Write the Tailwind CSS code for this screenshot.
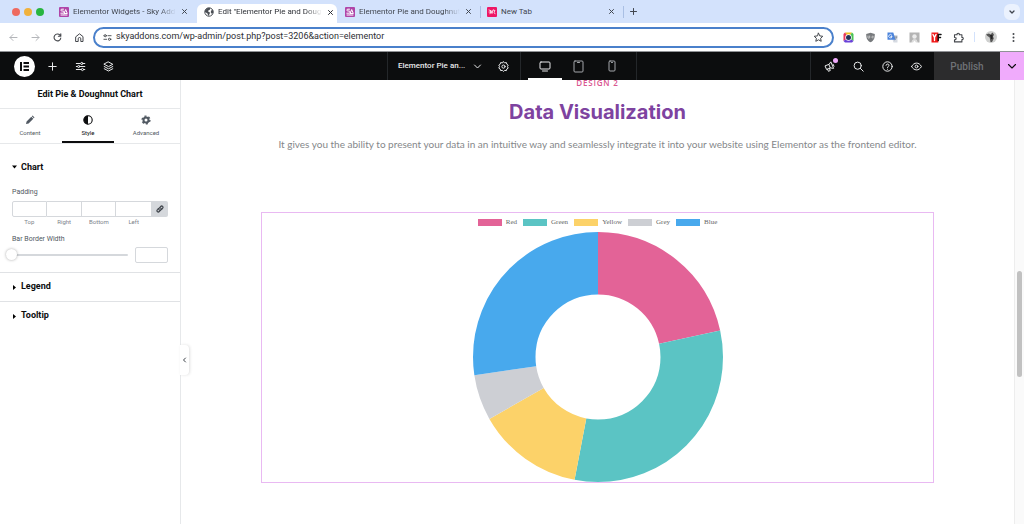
<!DOCTYPE html>
<html lang="en">
<head>
    <meta charset="UTF-8">
    <meta name="viewport" content="width=device-width, initial-scale=1.0">
    <title>Edit "Elementor Pie and Doughnut Chart"</title>
    <script src="https://cdn.jsdelivr.net/npm/@tailwindcss/browser@4"></script>
    <style>
        body { font-family: Roboto, "Liberation Sans", sans-serif; }
        .fade { -webkit-mask-image: linear-gradient(to right, #000 84%, transparent); mask-image: linear-gradient(to right, #000 84%, transparent); }
        .line { fill: none; stroke: currentColor; stroke-linecap: round; stroke-linejoin: round; }
        .slider { appearance: none; background: transparent; }
        .slider::-webkit-slider-runnable-track { height: 2px; border-radius: 2px; background: #d5d8dc; }
        .slider::-webkit-slider-thumb { appearance: none; width: 11px; height: 11px; margin-top: -5px; border-radius: 50%; background: #fff; box-shadow: 0 0 3px rgba(0,0,0,.35); }
    </style>
</head>
<body class="bg-white h-screen flex flex-col overflow-hidden">

    <!-- Browser tabs -->
    <div class="shrink-0 h-[23px] bg-[#d3e2fc] flex items-center text-[8px] text-[#41464f]">
        <div class="flex gap-1 pl-3 w-[55px] shrink-0">
            <span class="size-2 rounded-full bg-[#ee6a5f]"></span>
            <span class="size-2 rounded-full bg-[#f0b13c]"></span>
            <span class="size-2 rounded-full bg-[#28b53f]"></span>
        </div>
        <div class="flex items-center w-[142px] pl-1 pr-2 gap-1 shrink-0">
            <svg class="size-[10px] shrink-0" viewBox="0 0 10 10"><rect width="10" height="10" rx="1" fill="#b045a8"/><path class="line" style="color:#fff" d="M4.5 2.2H2.8C1.5 2.2 1.5 4 2.8 4H4c1.6 0 1.6 2.2 0 2.2H1.8M5 7l1.7-4.5L8.3 6.5H5.5M2 8h6"/></svg>
            <span class="fade w-[105px] whitespace-nowrap">Elementor Widgets - Sky Add</span>
            <button aria-label="Close tab" class="ml-auto"><svg class="line size-[9px]" viewBox="0 0 9 9"><path d="M2.5 2.5l4 4M6.5 2.5l-4 4"/></svg></button>
        </div>
        <div class="flex items-center w-[140px] h-[19px] self-end pl-[7px] pr-[5px] pb-[3px] gap-1 bg-white rounded-t-md text-[#2d3036] shrink-0">
            <svg class="size-[10px] shrink-0" viewBox="0 0 10 10"><circle cx="5" cy="5" r="4.2" fill="#fff" stroke="#4b4f55" stroke-width="1"/><path fill="#4b4f55" d="M1 3.5L3.5 1h3L5.8 2.8 4.3 3.5v1.3L6 5.4 5.6 7 4.3 9 3.5 6.5 1 5zM7 3.5l2-.5.3 2.4L8 7 6.8 5.5z"/></svg>
            <span class="fade w-[105px] whitespace-nowrap">Edit "Elementor Pie and Doug</span>
            <button aria-label="Close tab" class="ml-auto"><svg class="line size-[9px]" viewBox="0 0 9 9"><path d="M2.5 2.5l4 4M6.5 2.5l-4 4"/></svg></button>
        </div>
        <div class="flex items-center w-[144px] h-3 pl-2 pr-2 gap-1 border-r border-[#a9bfe4] shrink-0">
            <svg class="size-[10px] shrink-0" viewBox="0 0 10 10"><rect width="10" height="10" rx="1" fill="#b045a8"/><path class="line" style="color:#fff" d="M4.5 2.2H2.8C1.5 2.2 1.5 4 2.8 4H4c1.6 0 1.6 2.2 0 2.2H1.8M5 7l1.7-4.5L8.3 6.5H5.5M2 8h6"/></svg>
            <span class="fade w-[105px] whitespace-nowrap">Elementor Pie and Doughnut</span>
            <button aria-label="Close tab" class="ml-auto"><svg class="line size-[9px]" viewBox="0 0 9 9"><path d="M2.5 2.5l4 4M6.5 2.5l-4 4"/></svg></button>
        </div>
        <div class="flex items-center w-[143px] h-3 pl-[6px] pr-[7px] gap-1 border-r border-[#a9bfe4] shrink-0">
            <svg class="size-[10px] shrink-0" viewBox="0 0 10 10"><rect width="10" height="10" rx="1" fill="#ee1766"/><path class="line" style="color:#fff" stroke-width=".8" d="M2 3l2 .8L3 6.8M4 3.8l1 2.7 1-3.7 2 .8-1 1.6 1 1.6M2 5h2"/></svg>
            <span>New Tab</span>
            <button aria-label="Close tab" class="ml-auto"><svg class="line size-[9px]" viewBox="0 0 9 9"><path d="M2.5 2.5l4 4M6.5 2.5l-4 4"/></svg></button>
        </div>
        <button aria-label="New tab" class="ml-[5px]"><svg class="line size-[9px]" viewBox="0 0 9 9"><path d="M4.5 1.5v6M1.5 4.5h6"/></svg></button>
        <button aria-label="Search tabs" class="ml-auto mr-1 size-4 rounded-md bg-[#ebf2fe] flex items-center justify-center"><svg class="line size-2" viewBox="0 0 8 8"><path stroke-width="1.3" d="M2 3l2 2 2-2"/></svg></button>
    </div>

    <!-- Address bar -->
    <div class="shrink-0 h-[29px] bg-white border-b border-[#909296] flex items-center text-[#44474c]">
        <div class="flex items-center pl-2 gap-[11px] w-[93px] shrink-0">
            <button aria-label="Back" class="text-[#b3b5b9]"><svg class="line size-[11px] block" viewBox="0 0 11 11"><path d="M9 5.5H2M5 2.5l-3 3 3 3"/></svg></button>
            <button aria-label="Forward" class="text-[#b3b5b9]"><svg class="line size-[11px] block" viewBox="0 0 11 11"><path d="M2 5.5h7M6 2.5l3 3-3 3"/></svg></button>
            <button aria-label="Reload"><svg class="line size-[11px] block" viewBox="0 0 11 11"><path stroke-width="1.1" d="M8.8 6A3.4 3.4 0 1 1 8 3.2M8.8 1.8v2.4H6.4"/></svg></button>
            <button aria-label="Home"><svg class="line size-[11px] block" viewBox="0 0 11 11"><path d="M2 4.6L5.5 1.8 9 4.6v4.9H6.8V6.8a1.3 1.3 0 0 0-2.6 0v2.7H2z"/></svg></button>
        </div>
        <div class="flex-1 h-[21px] border-2 border-[#4a80cb] rounded-full flex items-center px-1 gap-1">
            <svg class="line size-[9px] ml-1 shrink-0" viewBox="0 0 10 10"><path d="M1 3h2.5M6.5 7H9M5.5 3H9M1 7h3"/><circle cx="2.5" cy="3" r="1.2" fill="#fff"/><circle cx="7.2" cy="7" r="1.2" fill="#fff"/></svg>
            <input type="text" aria-label="Address" value="skyaddons.com/wp-admin/post.php?post=3206&amp;action=elementor" class="flex-1 min-w-0 text-[9px] text-[#2c2e33] outline-none">
            <button aria-label="Bookmark"><svg class="line size-[11px] mr-1 block" viewBox="0 0 11 11"><path d="M5.5 1.2l1.3 2.7 3 .4-2.2 2 .6 3-2.7-1.5-2.7 1.5.6-3-2.2-2 3-.4z"/></svg></button>
        </div>
        <div class="flex items-center pl-[9px] gap-[11px] w-[190px] shrink-0">
            <svg class="size-[11px]" viewBox="0 0 11 11"><path fill="#f0c020" d="M2 .5h7L5.5 5.5z"/><path fill="#e8385a" d="M0.5 9V2L2 .5l3.5 5z"/><path fill="#4ac355" d="M9 .5L10.5 2v7l-5-3.5z"/><path fill="#6941d8" d="M.5 9L2 10.5h7L10.5 9l-5-3.5z"/><circle cx="5.5" cy="5.5" r="3.2" fill="#fff"/><circle cx="5.5" cy="5.5" r="2.5" fill="#24355c"/></svg>
            <svg class="size-[11px]" viewBox="0 0 11 11"><path fill="#777a7d" d="M5.5.8L9.8 2c0 4.5-1 6.6-4.3 8.3C2.2 8.6 1.2 6.5 1.2 2z"/><path class="line" style="color:#ddd" stroke-width=".8" d="M3 4v1.5c0 1 1.7 1 1.7 0V4M8.2 4.3c-2-.8-2 2.2 0 1.6"/></svg>
            <svg class="size-[11px]" viewBox="0 0 11 11"><path fill="#d5dae2" d="M4 3h6.5v7.5H6.5z"/><path fill="#4b84dc" d="M.5.5h5.8l2.2 7.2H.5z"/><path class="line" style="color:#fff" stroke-width=".8" d="M4.8 3.2a1.7 1.7 0 1 0 .3 1.3H3.8"/><path class="line" style="color:#6d7683" stroke-width=".7" d="M7.5 5h2.5M9.3 5c0 1.5-.7 2.3-1.3 2.8"/></svg>
            <svg class="size-[11px]" viewBox="0 0 11 11"><path fill="#b4b4b4" d="M.5.5h10v10h-2L7.5 7.8H4L2.5 10.5h-2z"/><circle cx="5.5" cy="4.5" r="2.2" fill="#ececec"/><path fill="#ddd" d="M2.5 10.5c0-4.5 6-4.5 6 0H7L5.5 8.5 4 10.5z"/></svg>
            <svg class="size-[11px]" viewBox="0 0 11 11"><path fill="#f01818" d="M.5.5h6.8v10H.5z"/><path class="line" style="color:#fff" stroke-width="1.4" d="M2 2.5l1.5 3 1.5-3M3.5 5.5v3"/><path class="line" style="color:#111" stroke-width="1.5" d="M10 2.5H7.2v6M7.2 5.5h2.3"/></svg>
            <button aria-label="Extensions"><svg class="line size-[11px] block" viewBox="0 0 11 11"><path stroke-width="1.1" d="M1.5 2.8h2.6c-.6-2 2.8-2 2.2 0h2.6v2.6c1.8-.4 1.8 2.6 0 2.2v2.3H1.5V7.7c2.2.4 2.2-2.6 0-2.2z"/></svg></button>
            <span class="w-px h-[10px] bg-[#d3e2fc] -mx-px"></span>
            <svg class="size-3" viewBox="0 0 12 12"><circle cx="6" cy="6" r="6" fill="#cfd0cf"/><path fill="#555" d="M1 3.5l3-1 1.5 1 2-2 1.5 2.2-1 1.8.8 2L7 11H5.5L4.7 6.5 2.5 5z"/><path fill="#222" d="M5 4h2.5v4H6z"/></svg>
            <button aria-label="Menu"><svg class="size-[11px] block" viewBox="0 0 11 11" fill="#44474c"><circle cx="5.5" cy="2" r="1"/><circle cx="5.5" cy="5.5" r="1"/><circle cx="5.5" cy="9" r="1"/></svg></button>
        </div>
    </div>

    <!-- Elementor top bar -->
    <header class="shrink-0 h-7 bg-[#0c0d0e] text-[#e8e9ea] flex">
        <div class="flex-1 flex items-center gap-[17px]">
            <button aria-label="Elementor" class="size-[21px] ml-[14px] -mr-[5px]"><svg class="block" viewBox="0 0 21 21"><circle cx="10.5" cy="10.5" r="10.5" fill="#fff"/><path fill="#0c0d0e" d="M6 6h2v9H6zM9.5 6H15v2H9.5zM9.5 9.5H15v2H9.5zM9.5 13H15v2H9.5z"/></svg></button>
            <button aria-label="Add element"><svg class="line size-[11px] block" viewBox="0 0 11 11"><path d="M5.5 1.8v7.4M1.8 5.5h7.4"/></svg></button>
            <button aria-label="Site settings"><svg class="line size-[11px] block" viewBox="0 0 11 11"><path d="M1.3 2.5h4M8.3 2.5h1.5M1.3 5.5h1M5.3 5.5h4.5M1.3 8.5h5M9 8.5h.8"/><circle cx="6.8" cy="2.5" r="1.1"/><circle cx="3.7" cy="5.5" r="1.1"/><circle cx="7.5" cy="8.5" r="1.1"/></svg></button>
            <button aria-label="Structure"><svg class="line size-[11px] block" viewBox="0 0 11 11"><path d="M5.5 1l4.3 2.3-4.3 2.3-4.3-2.3zM1.2 5.5l4.3 2.3 4.3-2.3M1.2 7.7L5.5 10l4.3-2.3"/></svg></button>
        </div>
        <div class="flex w-[250px] shrink-0 border-x border-[#24272a]">
            <button class="flex items-center pl-[10px] gap-2 text-[8px] font-medium whitespace-nowrap">Elementor Pie an...<svg class="line size-[9px]" viewBox="0 0 9 9"><path d="M1.5 3l3 3 3-3"/></svg></button>
            <button aria-label="Page settings" class="w-[34px] ml-auto pr-[1px] flex items-center justify-center border-r border-[#24272a]"><svg class="line size-[11px]" viewBox="0 0 11 11"><path d="M5.5.8l1.2 1 1.7-.2.4 1.6 1.4 1-.7 1.4.7 1.5-1.4.9-.4 1.6-1.7-.2-1.2 1-1.2-1-1.7.2-.4-1.6-1.4-.9.7-1.5-.7-1.4 1.4-1 .4-1.6 1.7.2z"/><circle cx="5.5" cy="5.6" r="1.6"/></svg></button>
            <div class="flex w-[115px] justify-between px-[7px]">
                <button aria-label="Desktop" class="w-[34px] border-b-2 border-white pt-[2px] flex items-center justify-center"><svg class="line w-3 h-[11px]" viewBox="0 0 12 11"><rect x="1" y="1" width="10" height="7" rx="1"/><path d="M3.5 10h5"/></svg></button>
                <button aria-label="Tablet" class="w-[34px] flex items-center justify-center text-[#a4a7ab]"><svg class="line w-[11px] h-[13px]" viewBox="0 0 11 13"><rect x="1" y="1" width="9" height="11" rx="1"/><path d="M4.5 2.5h2"/></svg></button>
                <button aria-label="Mobile" class="w-[34px] flex items-center justify-center text-[#a4a7ab]"><svg class="line w-2 h-3" viewBox="0 0 8 12"><rect x="1" y="1" width="6" height="10" rx="1"/><path d="M3.5 2.5h1"/></svg></button>
            </div>
        </div>
        <div class="flex-1 flex justify-end">
            <div class="flex items-center gap-[18px] border-l border-[#24272a] pl-[13px] pr-3">
                <button aria-label="What's new" class="relative"><svg class="line size-[11px] block" viewBox="0 0 11 11"><path d="M7 1.2l2.6 6.2-3.3-.5-3.7 1.6L1 4.9l3.8-1.5zM4.8 3.4l1.5 3.5M3.5 8.2l.9 2.1 1.9-.8-.9-2.2M9 3.200l1 2"/></svg><span class="absolute -top-[3px] -right-[3px] size-[5px] rounded-full bg-[#f0abfc]"></span></button>
                <button aria-label="Finder"><svg class="line size-[11px] block" viewBox="0 0 11 11"><circle cx="4.7" cy="4.7" r="3.6"/><path d="M7.4 7.4l2.8 2.8"/></svg></button>
                <button aria-label="Help"><svg class="line size-[11px] block" viewBox="0 0 11 11"><circle cx="5.5" cy="5.5" r="4.7"/><path d="M4 4.3c.1-1.8 3-1.7 3 0 0 1.1-1.5 1-1.5 2.2M5.5 8.2v.1"/></svg></button>
                <button aria-label="Preview"><svg class="line size-[11px] block" viewBox="0 0 11 11"><path d="M.6 5.5c2.3-4.6 7.5-4.6 9.8 0-2.3 4.6-7.5 4.6-9.8 0z"/><circle cx="5.5" cy="5.5" r="1.4"/></svg></button>
            </div>
            <button class="w-[66px] bg-[#2c2c2d] text-[#6f7276] text-[10px] font-medium" disabled>Publish</button>
            <button aria-label="Save options" class="w-6 bg-[#f0abfc] text-[#0c0d0e] flex items-center justify-center"><svg class="line size-[10px]" viewBox="0 0 10 10"><path stroke-width="1.1" d="M1.5 3.5L5 7l3.5-3.5"/></svg></button>
        </div>
    </header>

    <div class="flex-1 min-h-0 flex">
        <!-- Panel -->
        <aside class="relative w-[181px] shrink-0 border-r border-[#e6e8ea] text-[#515962]">
            <h1 class="h-7 leading-7 text-center text-[9px] font-bold text-[#0c0d0e]">Edit Pie &amp; Doughnut Chart</h1>
            <nav class="h-9 border-y border-[#e6e8ea] flex justify-between pl-1 pr-2 text-[6px] leading-[10px]">
                <button class="w-[52px] flex flex-col items-center justify-center gap-[3px] pt-px"><svg class="size-[10px]" viewBox="0 0 10 10" fill="#515962"><path d="M1 9l.6-2.5 4.7-4.7 2 2-4.7 4.7zM6.8 1.3l.8-.7 1.9 1.9-.7.8z"/></svg>Content</button>
                <button class="w-[52px] flex flex-col items-center justify-center gap-[3px] text-[#0c0d0e] border-b-2 border-[#0c0d0e] pt-[3px]"><svg class="size-[10px]" viewBox="0 0 10 10"><circle cx="5" cy="5" r="4.2" fill="#fff" stroke="#0c0d0e" stroke-width="1.1"/><path fill="#0c0d0e" d="M5 .8a4.200 4.200 0 0 0 0 8.400z"/></svg>Style</button>
                <button class="w-[52px] flex flex-col items-center justify-center gap-[3px] pt-px"><svg class="size-[10px]" viewBox="0 0 10 10"><circle cx="5" cy="5" r="2.5" fill="none" stroke="#515962" stroke-width="2"/><circle cx="5" cy="5" r="3.9" fill="none" stroke="#515962" stroke-width="1.4" stroke-dasharray="2.040"/></svg>Advanced</button>
            </nav>

            <section class="px-3 pb-[9px] border-b border-[#e0e2e5]">
                <h2 class="pt-[15px] text-[9px] leading-4 font-bold text-[#0c0d0e]"><button class="flex items-center gap-1"><svg class="w-[5px] h-1" viewBox="0 0 5 4"><path d="M0 .5h5L2.5 3.5z"/></svg>Chart</button></h2>
                <fieldset class="mt-[11px]">
                    <legend class="text-[7px] leading-3">Padding</legend>
                    <div class="mt-[3px] flex text-[6px] leading-[10px] text-[#7d838a] text-center">
                        <label class="flex-1 flex flex-col-reverse">Top<input type="text" class="w-full h-4 border border-[#d5d8dc] rounded-l-xs text-[8px]"></label>
                        <label class="flex-1 flex flex-col-reverse">Right<input type="text" class="w-full h-4 border-y border-r border-[#d5d8dc] text-[8px]"></label>
                        <label class="flex-1 flex flex-col-reverse">Bottom<input type="text" class="w-full h-4 border-y border-r border-[#d5d8dc] text-[8px]"></label>
                        <label class="flex-1 flex flex-col-reverse">Left<input type="text" class="w-full h-4 border-y border-[#d5d8dc] text-[8px]"></label>
                        <button type="button" aria-label="Link values" class="w-[17px] h-4 bg-[#d5d8dc] rounded-r-xs flex items-center justify-center text-[#3f444b]"><svg class="line size-2" viewBox="0 0 8 8"><path stroke-width="1.2" d="M3.2 4.8c-1-1 .2-2 1.5-3.3 1.3-1.3 3.2.5 1.8 1.9L5.7 4.3M4.8 3.2c1 1-.2 2-1.5 3.3C2 7.8.1 6 1.5 4.6l.8-.9"/></svg></button>
                    </div>
                </fieldset>
                <label for="barWidth" class="block pt-1 text-[7px] leading-4">Bar Border Width</label>
                <div class="flex items-center justify-between">
                    <input id="barWidth" type="range" min="0" max="100" value="0" class="slider w-[122px] h-4 -ml-[6px]">
                    <input type="text" aria-label="Bar Border Width value" class="w-[33px] h-4 border border-[#d5d8dc] rounded-xs text-[8px]">
                </div>
            </section>
            <h2 class="h-[29px] px-3 border-b border-[#e0e2e5] flex text-[9px] font-bold text-[#0c0d0e]"><button class="flex items-center gap-1"><svg class="w-[5px] h-[5px]" viewBox="0 0 5 5"><path d="M1 0v5l3-2.5z"/></svg>Legend</button></h2>
            <h2 class="h-7 px-3 flex text-[9px] font-bold text-[#0c0d0e]"><button class="flex items-center gap-1"><svg class="w-[5px] h-[5px]" viewBox="0 0 5 5"><path d="M1 0v5l3-2.5z"/></svg>Tooltip</button></h2>

            <button aria-label="Hide panel" class="absolute left-full top-[265px] w-[9px] h-[30px] bg-white rounded-r-sm shadow-[1px_0_3px_rgba(0,0,0,0.12)] flex items-center justify-center text-[#3f444b]"><svg class="line size-[6px]" viewBox="0 0 6 6"><path d="M3.5 1L1.5 3l2 2"/></svg></button>
        </aside>

        <!-- Canvas -->
        <main class="flex-1 min-w-0 overflow-hidden">
            <div class="-mt-[3px] text-center">
                <p class="text-[8px] leading-3 font-semibold tracking-widest text-[#d9568f] font-['Open_Sans',sans-serif]">DESIGN 2</p>
                <h2 class="mt-[7px] text-[20px] leading-8 font-bold text-[#7e43a0] font-[Inter,sans-serif]">Data Visualization</h2>
                <p class="mt-2 text-[10px] leading-4 text-[#85878a] font-[Lato,sans-serif]">It gives you the ability to present your data in an intuitive way and seamlessly integrate it into your website using Elementor as the frontend editor.</p>
            </div>
            <figure class="mt-[60px] mx-[80px] border border-[#e9b9f2] pt-1 font-['Liberation_Serif',serif]">
                <figcaption class="flex justify-center gap-[6px] text-[7px] leading-[10px] text-[#666]">
                    <span class="flex items-center gap-1"><i class="w-6 h-[7px] bg-[#e36397]"></i>Red</span>
                    <span class="flex items-center gap-1"><i class="w-6 h-[7px] bg-[#5bc4c4]"></i>Green</span>
                    <span class="flex items-center gap-1"><i class="w-6 h-[7px] bg-[#fcd269]"></i>Yellow</span>
                    <span class="flex items-center gap-1"><i class="w-6 h-[7px] bg-[#cdcfd4]"></i>Grey</span>
                    <span class="flex items-center gap-1"><i class="w-6 h-[7px] bg-[#48a9ed]"></i>Blue</span>
                </figcaption>
                <!-- 11 / 16 / 7 / 3 / 14 -->
                <svg class="block mx-auto mt-[5px] w-[250px]" viewBox="0 0 500 500" fill="none" stroke-width="125">
                    <g transform="rotate(-90 250 250)">
                        <circle cx="250" cy="250" r="187.5" pathLength="51" stroke="#e36397" stroke-dasharray="11 40"/>
                        <circle cx="250" cy="250" r="187.5" pathLength="51" stroke="#5bc4c4" stroke-dasharray="16 35" stroke-dashoffset="-11"/>
                        <circle cx="250" cy="250" r="187.5" pathLength="51" stroke="#fcd269" stroke-dasharray="7 44" stroke-dashoffset="-27"/>
                        <circle cx="250" cy="250" r="187.5" pathLength="51" stroke="#cdcfd4" stroke-dasharray="3 48" stroke-dashoffset="-34"/>
                        <circle cx="250" cy="250" r="187.5" pathLength="51" stroke="#48a9ed" stroke-dasharray="14 37" stroke-dashoffset="-37"/>
                    </g>
                </svg>
            </figure>
        </main>
        <div class="w-[10px] shrink-0 bg-[#fafafa] border-l border-[#ededed] flex flex-col items-center">
            <span class="grow-[191]"></span>
            <span class="w-[5px] grow-[106] rounded-full bg-[#c1c1c1]"></span>
            <span class="grow-[147]"></span>
        </div>
    </div>
</body>
</html>
